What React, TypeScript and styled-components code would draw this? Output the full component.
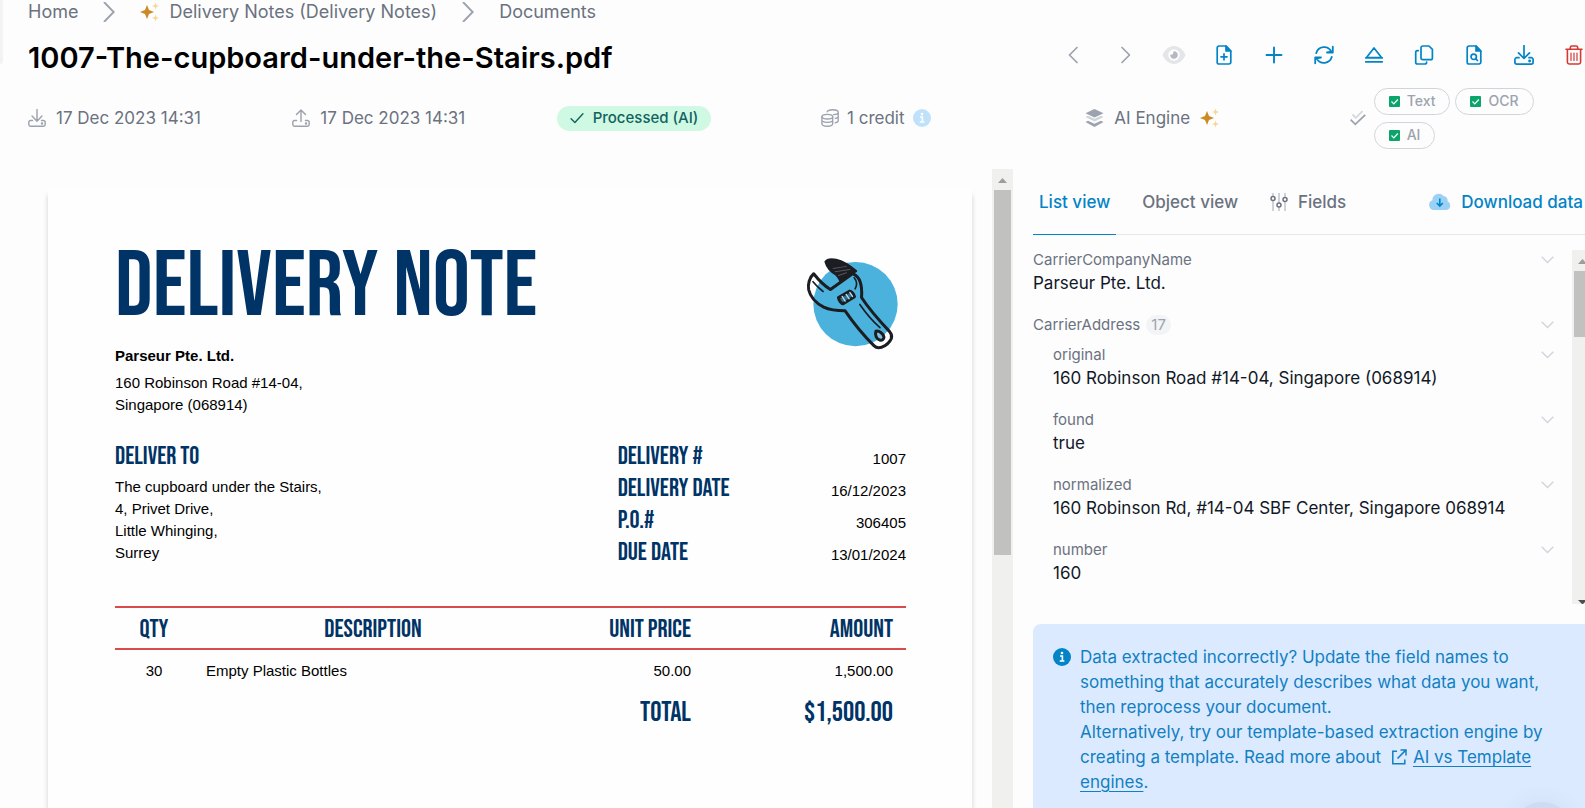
import React from "react";
import styled, { createGlobalStyle } from "styled-components";

const ui = `Inter, "Liberation Sans", sans-serif`;
const display = `"Bebas Neue", "League Gothic", "Open Sans Condensed", sans-serif`;
const paper = `"Liberation Sans", Arial, sans-serif`;

const color = {
  page: "#fdfdfd",
  blue: "#0284c7",
  muted: "#6b7280",
  faint: "#9ca3af",
  line: "#e5e7eb",
  ink: "#111827",
  navy: "#003366",
  red: "#d94a4a",
};

const GlobalStyle = createGlobalStyle`
  *, *::before, *::after { box-sizing: border-box; }
  body { margin: 0; background: ${color.page}; font-family: ${ui}; }
  button { font: inherit; background: none; border: 0; padding: 0; cursor: pointer; }
`;

/* ---------- shell ---------- */

const Shell = styled.div`
  display: flex;
  height: 100vh;
  overflow: hidden;
  color: ${color.muted};
  font-size: 17px;
`;

const Rail = styled.div`
  flex: 0 0 3px;
  height: 64px;
  background: #f3f3f4;
  border-bottom-right-radius: 3px;
`;

const Main = styled.main`
  flex: 1;
  min-width: 0;
  display: flex;
  flex-direction: column;
  padding-left: 25px;
`;

/* ---------- header ---------- */

const Crumbs = styled.nav`
  display: flex;
  align-items: center;
  height: 24px;
  font-size: 18px;
  line-height: 24px;
`;

const Crumb = styled.a`
  display: flex;
  align-items: center;
  gap: 10px;
  color: inherit;
  text-decoration: none;
`;

const CrumbSeparator = styled.svg`
  flex: none;
  width: 12px;
  height: 20px;
  margin: 0 25px;
`;

const TitleRow = styled.div`
  display: flex;
  align-items: center;
  justify-content: space-between;
  height: 36px;
  margin: 13px -14px 0 0;
`;

const Title = styled.h1`
  margin: 0;
  padding-top: 6px;
  color: #000;
  font-size: 29px;
  line-height: 36px;
  font-weight: 600;
  white-space: nowrap;
`;

const Toolbar = styled.div`
  display: flex;
`;

const ToolButton = styled.button<{ $tone: string }>`
  display: grid;
  place-items: center;
  width: 50px;
  height: 36px;
  color: ${(p) => p.$tone};
`;

const MetaRow = styled.div`
  display: grid;
  grid-template-columns: repeat(6, 1fr);
  align-items: center;
  height: 68px;
  margin: 11px -29px 17px 0;
`;

const Meta = styled.div<{ $gap?: number }>`
  display: flex;
  align-items: center;
  gap: ${(p) => p.$gap ?? 10}px;
  white-space: nowrap;
  line-height: 24px;
`;

const MetaIcon = styled.span`
  display: grid;
  color: ${color.faint};
`;

const Status = styled.span`
  display: flex;
  align-items: center;
  gap: 9px;
  height: 25px;
  padding: 0 13px;
  border-radius: 13px;
  background: #d0f9e3;
  color: #11635f;
  font-size: 15px;
  font-weight: 500;
`;

const Pills = styled.div`
  display: flex;
  flex-wrap: wrap;
  gap: 7px 5px;
  max-width: 180px;
`;

const Pill = styled.span`
  display: flex;
  align-items: center;
  gap: 7px;
  height: 27px;
  padding: 0 14px;
  border: 1px solid #d1d5db;
  border-radius: 14px;
  color: ${color.faint};
  font-size: 14px;
  font-weight: 500;
`;

/* ---------- body ---------- */

const Body = styled.div`
  flex: 1;
  min-height: 0;
  display: grid;
  grid-template-columns: 985fr 560fr;
  gap: 20px;
  margin-right: -8px;
`;

const Viewer = styled.section`
  display: flex;
  min-width: 0;
  overflow: hidden;
`;

const Sheet = styled.article`
  flex: 1;
  min-width: 0;
  height: 1308px;
  margin: 20px 20px 0;
  padding: 42px 66px 0 67px;
  background: #fefefe;
  box-shadow: 0 6px 5px rgba(0, 0, 0, 0.18);
  color: #000;
  font-family: ${paper};
  font-size: 15px;
  line-height: 22px;
`;

const SheetTop = styled.header`
  display: flex;
  justify-content: space-between;
  height: 114px;
  padding-right: 6px;
`;

const SheetTitle = styled.h2`
  margin: 12px 0 0;
  color: ${color.navy};
  font-family: ${display};
  font-size: 93px;
  line-height: 88px;
  font-weight: 400;
`;

const Logo = styled.svg`
  width: 97px;
  height: 97px;
  margin-top: 24px;
`;

const Address = styled.address`
  font-style: normal;
`;

const Company = styled.strong`
  display: block;
  margin-bottom: 5px;
`;

const SheetColumns = styled.div`
  display: grid;
  grid-template-columns: 502fr 288fr;
  margin-top: 25px;
`;

const SheetHeading = styled.h3`
  margin: 0 0 3px;
  color: ${color.navy};
  font-family: ${display};
  font-size: 25px;
  line-height: 32px;
  font-weight: 400;
`;

const Facts = styled.dl`
  margin: 0;
`;

const Fact = styled.div`
  display: flex;
  align-items: baseline;
  justify-content: space-between;
  height: 32px;
`;

const FactName = styled.dt`
  color: ${color.navy};
  font-family: ${display};
  font-size: 25px;
  line-height: 32px;
`;

const FactValue = styled.dd`
  margin: 0;
`;

const Lines = styled.table`
  width: 100%;
  margin-top: 37px;
  border-collapse: collapse;
  table-layout: fixed;
`;

const Col = styled.col<{ $width?: string }>`
  width: ${(p) => p.$width ?? "auto"};
`;

const LinesHead = styled.th<{ $align: string }>`
  height: 42px;
  padding: 4px 13px 0;
  border: solid ${color.red};
  border-width: 2px 0;
  color: ${color.navy};
  font-family: ${display};
  font-size: 25px;
  line-height: 36px;
  font-weight: 400;
  text-align: ${(p) => p.$align};
`;

const LinesCell = styled.td<{ $align: string }>`
  height: 42px;
  padding: 0 13px;
  text-align: ${(p) => p.$align};
`;

const TotalCell = styled.td`
  height: 40px;
  padding: 4px 13px 0;
  color: ${color.navy};
  font-family: ${display};
  font-size: 28px;
  line-height: 36px;
  text-align: right;
`;

/* ---------- scrollbars ---------- */

const Track = styled.div`
  flex: 0 0 21px;
  display: flex;
  flex-direction: column;
  justify-content: space-between;
  padding: 0 2px;
  overflow: hidden;
  background: #f0f0ef;
`;

const TrackTop = styled.div``;

const Arrow = styled.svg`
  display: block;
  width: 17px;
  height: 21px;
`;

const CutArrow = styled(Arrow)`
  height: 4px;
`;

const Thumb = styled.div<{ $length: number }>`
  height: ${(p) => p.$length}px;
  background: #c1c1c0;
`;

/* ---------- data panel ---------- */

const Panel = styled.section`
  min-width: 0;
  display: flex;
  flex-direction: column;
`;

const TabBar = styled.div`
  flex: none;
  display: flex;
  gap: 20px;
  height: 66px;
  border-bottom: 1px solid ${color.line};
`;

const Tab = styled.button<{ $active?: boolean }>`
  display: flex;
  align-items: center;
  gap: 10px;
  height: 66px;
  padding: 0 6px;
  border-bottom: 1px solid ${(p) => (p.$active ? color.blue : "transparent")};
  color: ${(p) => (p.$active ? color.blue : color.muted)};
  font-weight: 500;
`;

const Download = styled.a`
  display: flex;
  align-items: center;
  gap: 10px;
  margin: 0 10px 0 auto;
  color: ${color.blue};
  font-weight: 500;
  text-decoration: none;
`;

const FieldsBox = styled.div`
  flex: none;
  display: flex;
  height: 354px;
  margin-top: 15px;
`;

const FieldList = styled.div`
  flex: 1;
  margin-top: -1px;
  overflow: hidden;
`;

const Field = styled.div<{ $nested?: boolean; $group?: boolean }>`
  padding-left: ${(p) => (p.$nested ? 20 : 0)}px;
  margin-bottom: ${(p) => (p.$group ? 8 : 19)}px;
`;

const FieldHead = styled.div`
  display: flex;
  align-items: center;
  gap: 6px;
  height: 22px;
  padding-right: 18px;
  font-size: 15px;
  line-height: 22px;
`;

const Count = styled.span`
  height: 20px;
  padding: 0 5px;
  border-radius: 10px;
  background: #f3f4f6;
  color: ${color.faint};
  line-height: 20px;
`;

const Expand = styled.button`
  display: grid;
  place-items: center;
  margin-left: auto;
`;

const FieldValue = styled.div`
  color: ${color.ink};
  line-height: 24px;
`;

const Notice = styled.aside`
  flex: none;
  display: flex;
  align-items: flex-start;
  gap: 9px;
  margin-top: 20px;
  padding: 21px 30px 20px 20px;
  border-radius: 8px;
  background: #dbeafe;
  color: #1180c3;
  line-height: 25px;
`;

const NoticeIcon = styled.span`
  flex: none;
  display: grid;
  place-items: center;
  height: 24px;
`;

const NoticeText = styled.p`
  margin: 0;
`;

const ExternalIcon = styled.svg`
  width: 16px;
  height: 16px;
  margin: 0 6px 0 5px;
  vertical-align: -2px;
`;

const NoticeLink = styled.a`
  color: inherit;
  text-underline-offset: 3px;
`;

const ChatBubble = styled.button`
  position: fixed;
  right: 13px;
  bottom: -54px;
  width: 60px;
  height: 60px;
  border-radius: 50%;
  background: #cddcf1;
  box-shadow: 0 0 18px 4px rgba(80, 110, 160, 0.06);
`;

/* ---------- icons ---------- */

const Icon = ({ size = 20, w = 1.7, children }: { size?: number; w?: number; children: React.ReactNode }) => (
  <svg width={size} height={size} viewBox="0 0 20 20" fill="none" stroke="currentColor" strokeWidth={w}
    strokeLinecap="round" strokeLinejoin="round" aria-hidden="true">
    {children}
  </svg>
);

const fileOutline = (
  <>
    <path d="M12 1H5a1.8 1.8 0 0 0-1.8 1.8v14.4A1.8 1.8 0 0 0 5 19h10a1.8 1.8 0 0 0 1.8-1.8V6z" />
    <path d="M12 1v5h4.8z" fill="currentColor" />
  </>
);
const tray = (
  <>
    <path d="M5 12.7H2.8A1.9 1.9 0 0 0 .9 14.6v2.6a1.9 1.9 0 0 0 1.9 1.9h14.4a1.9 1.9 0 0 0 1.9-1.9v-2.6a1.9 1.9 0 0 0-1.9-1.9H15" />
    <circle cx="15.6" cy="16" r=".6" fill="currentColor" />
  </>
);

const PrevIcon = () => <Icon><path d="M13 2.5 5.5 10l7.5 7.5" /></Icon>;
const NextIcon = () => <Icon><path d="M8 2.5 15.500 10 8 17.500" /></Icon>;
const EyeIcon = () => (
  <svg width="24" height="20" viewBox="0 0 24 20" aria-hidden="true">
    <path d="M.5 10C3 4.500 7 1 12 1s9 3.500 11.500 9C21 15.500 17 19 12 19S3 15.500.5 10z" fill="#e3e5e8" />
    <circle cx="12" cy="10" r="5.8" fill="#fdfdfd" />
    <path d="M12 6.2a3.8 3.8 0 1 1-3.8 3.4c1.3.7 3.200-.3 3-2.200z" fill="#b4b9c1" />
  </svg>
);
const FileAddIcon = () => <Icon>{fileOutline}<path d="M10 8.800v6M7 11.800h6" /></Icon>;
const PlusIcon = () => <Icon w={1.9}><path d="M10 2.500v15M2.500 10h15" /></Icon>;
const RefreshIcon = () => (
  <Icon w={1.8}>
    <path d="M2.2 8.2A8.2 8.2 0 0 1 17.3 6.4M18.8 1.700v5.800H13l5.800-1z" />
    <path d="M17.8 11.8A8.2 8.2 0 0 1 2.7 13.6M1.2 18.300v-5.800H7l-5.800 1z" />
  </Icon>
);
const EjectIcon = () => <Icon><path d="M10 3 17.500 12.600h-15zM1.700 12.800h16.600M1.700 16.800h16.600" /></Icon>;
const CopyIcon = () => (
  <Icon>
    <path d="M8.700 1h6.300l3.400 3.300v8.700a1.700 1.700 0 0 1-1.700 1.700h-8A1.700 1.700 0 0 1 7 13V2.700A1.700 1.700 0 0 1 8.700 1z" />
    <path d="M4.300 5.600h-.8a1.800 1.800 0 0 0-1.800 1.800v9.800A1.800 1.800 0 0 0 3.500 19h7.300a1.800 1.800 0 0 0 1.800-1.800" />
  </Icon>
);
const FileSearchIcon = () => <Icon>{fileOutline}<circle cx="9.7" cy="11.8" r="2.7" /><path d="m11.800 13.800 1.700 1.700" /></Icon>;
const DownloadIcon = ({ size = 20, w = 1.7 }: { size?: number; w?: number }) => (
  <Icon size={size} w={w}><path d="M10 .7v12.600M4.500 7.800l5.500 5.700 5.500-5.700" />{tray}</Icon>
);
const UploadIcon = () => <Icon size={18} w={1.6}><path d="M10 14V1.200M5 6.200l5-5 5 5" />{tray}</Icon>;
const TrashIcon = () => (
  <Icon w={1.6}>
    <path d="M2 4.300h16M3.400 4.500v12.800A1.800 1.800 0 0 0 5.200 19h9.600a1.800 1.800 0 0 0 1.800-1.700V4.500M6.300 4V2.500A1.600 1.600 0 0 1 7.900 1h4.200a1.600 1.600 0 0 1 1.600 1.500V4" />
    <path d="M7 8v7.500M10 8v7.500M13 8v7.500" strokeWidth="1.2" />
  </Icon>
);
const SparkleIcon = () => (
  <svg width="19" height="20" viewBox="0 0 19 20" aria-hidden="true">
    <path d="M7 3 9 8l5 2-5 2-2 5-2-5-5-2 5-2z" fill="#cb8a25" />
    <path d="m15.500.5.9 2.600 2.600.9-2.600.9-.9 2.600-.9-2.600L12 4l2.600-.9zM15.500 12.500l.9 2.600 2.600.9-2.600.9-.9 2.600-.9-2.600L12 16l2.600-.9z" fill="#f9d596" />
  </svg>
);
const CheckIcon = () => <Icon size={14} w={2}><path d="m1.500 11 5.500 5.500L18.500 4" /></Icon>;
const CoinsIcon = () => (
  <Icon size={18} w={1.5}>
    <ellipse cx="7" cy="8.5" rx="6" ry="2.6" />
    <path d="M1 8.500v8C1 18 3.700 19.200 7 19.200s6-1.200 6-2.700v-8M1 12.300c0 1.500 2.700 2.600 6 2.600s6-1.100 6-2.600" />
    <path d="M6.800 3.200C7.300 1.800 9.900.8 13 .8c3.400 0 6.100 1.200 6.100 2.700S16.600 6 14 6.200M19.100 3.500v9.500c0 1-1.300 1.900-3.200 2.300M19.100 8.200c0 1-1.300 1.900-3.200 2.300" />
  </Icon>
);
const InfoIcon = ({ fill, size = 18 }: { fill: string; size?: number }) => (
  <svg width={size} height={size} viewBox="0 0 18 18" aria-hidden="true">
    <circle cx="9" cy="9" r="9" fill={fill} />
    <circle cx="9" cy="5" r="1.3" fill="#fff" />
    <path d="M7 8h2.400v4.800M6.700 13h4.700" fill="none" stroke="#fff" strokeWidth="1.6" />
  </svg>
);
const LayersIcon = () => (
  <svg width="19" height="18" viewBox="0 0 18 18" fill={color.faint} aria-hidden="true">
    <path d="m9 0 9 4.200-9 4.200L0 4.200z" />
    <path d="m0 8 2.500-1.200L9 9.800l6.500-3L18 8l-9 4.600z" opacity=".45" />
    <path d="m0 13 2.500-1.300L9 14.800l6.500-3.100L18 13l-9 5z" />
  </svg>
);
const DoubleCheckIcon = () => (
  <svg width="16" height="16" viewBox="0 0 16 16" fill="none" strokeWidth="1.8" aria-hidden="true">
    <path d="m2.500 4.500 3.300 3.300L12.500 1.200" stroke="#d5d8dd" />
    <path d="m.6 9.600 4.700 4.700L15.200 4.800" stroke={color.faint} />
  </svg>
);
const TickBox = () => (
  <svg width="11" height="11" viewBox="0 0 11 11" aria-hidden="true">
    <rect width="11" height="11" rx="1" fill="#0ba56c" />
    <path d="m2.500 5.500 2.300 2.300 4-4.300" fill="none" stroke="#fff" strokeWidth="1.2" />
  </svg>
);
const SlidersIcon = () => (
  <svg width="18" height="18" viewBox="0 0 18 18" fill="none" strokeWidth="1.5" aria-hidden="true">
    <path d="M3 0v18M9 0v18M15 0v18" stroke="#cfd3d9" strokeWidth="2" />
    <g fill="#fdfdfd" stroke="#6b7280">
      <circle cx="3" cy="5.5" r="2" /><circle cx="9" cy="12" r="2" /><circle cx="15" cy="6.5" r="2" />
    </g>
  </svg>
);
const CloudIcon = () => (
  <svg width="22" height="18" viewBox="0 0 22 18" fill="none" aria-hidden="true">
    <path d="M5 17a5 5 0 0 1-1.600-9.700A6.300 6.300 0 0 1 14.500 3a4.200 4.200 0 0 1 4 5.300A4.600 4.600 0 0 1 17.500 17z" fill="#9bd1f7" />
    <path d="M10.800 5.500v7.500M7.800 10l3 3 3-3" stroke={color.blue} strokeWidth="1.6" />
  </svg>
);
const ChevronDown = () => (
  <svg width="13" height="8" viewBox="0 0 13 8" fill="none" stroke="#d1d5db" strokeWidth="1.4" aria-hidden="true">
    <path d="m.7.8 5.800 5.800L12.300.8" />
  </svg>
);
const Separator = () => (
  <CrumbSeparator viewBox="0 0 12 20" fill="none" stroke={color.faint} strokeWidth="1.9" aria-hidden="true">
    <path d="M1 0l9.700 10L1 20" />
  </CrumbSeparator>
);
const UpArrow = () => <Arrow viewBox="0 0 17 21"><path d="M4 14h9L8.500 9z" fill="#9a9e9e" /></Arrow>;

const Wrench = () => (
  <Logo viewBox="40 30 290 290" fill="none" stroke="#1c1d22" strokeLinecap="round" strokeLinejoin="round" aria-label="Wrench">
    <circle cx="197" cy="177" r="126" fill="#4ab2dc" stroke="none" />
    <path d="M255 294 300 252 306 278 286 302 264 306z" fill="#fff" stroke="none" />
    <path d="M72 86C59 97 54 118 57 134c5 22 22 40 45 52 19 9 42 11 64 11 28 41 57 75 86 104 7 7 17 7 25 4 12-5 22-14 27-25 3-8 0-15-5-21-30-32-60-65-84-102 1-15 2-29-4-46-3-10-11-20-23-25l-66 47C107 124 90 109 72 86z" strokeWidth="9" />
    <path d="M107 50c5-8 20-8 32-6 22 5 44 20 60 34l-48 29c-3-8-7-13-12-18-15-9-27-20-32-39z" fill="#1c1d22" strokeWidth="6" />
    <path d="m130 70 40-6M136 80l44-7M146 91l24-8" stroke="#55575e" strokeWidth="3" />
    <path d="M70 110c8 10 18 20 30 29M193 98c9 10 9 24 3 33M210 178c18 26 38 50 60 69" strokeWidth="5" />
    <path d="m146 157 34-19c6 1 13 10 14 17l-34 21c-6-1-13-11-14-19z" fill="#2d6f8c" strokeWidth="9" />
    <path d="m157 154 9 14M169 148l9 13M180 142l8 12" stroke="#b9dcea" strokeWidth="4" />
    <path d="M258 258c9-3 22 7 24 17 0 7-6 11-11 10-11-3-17-15-13-27z" fill="#7fc5e2" strokeWidth="9" />
  </Logo>
);

/* ---------- data ---------- */

const tools = [
  { name: "Previous", tone: color.faint, Glyph: PrevIcon },
  { name: "Next", tone: color.faint, Glyph: NextIcon },
  { name: "View", tone: color.faint, Glyph: EyeIcon },
  { name: "New template", tone: color.blue, Glyph: FileAddIcon },
  { name: "Add", tone: color.blue, Glyph: PlusIcon },
  { name: "Reprocess", tone: color.blue, Glyph: RefreshIcon },
  { name: "Skip", tone: color.blue, Glyph: EjectIcon },
  { name: "Copy", tone: color.blue, Glyph: CopyIcon },
  { name: "Inspect", tone: color.blue, Glyph: FileSearchIcon },
  { name: "Download", tone: color.blue, Glyph: DownloadIcon },
  { name: "Delete", tone: "#d33a35", Glyph: TrashIcon },
];

const facts = [
  ["DELIVERY #", "1007"],
  ["DELIVERY DATE", "16/12/2023"],
  ["P.O.#", "306405"],
  ["DUE DATE", "13/01/2024"],
];

const fields: { name: string; value?: string; count?: number; nested?: boolean }[] = [
  { name: "CarrierCompanyName", value: "Parseur Pte. Ltd." },
  { name: "CarrierAddress", count: 17 },
  { name: "original", value: "160 Robinson Road #14-04, Singapore (068914)", nested: true },
  { name: "found", value: "true", nested: true },
  { name: "normalized", value: "160 Robinson Rd, #14-04 SBF Center, Singapore 068914", nested: true },
  { name: "number", value: "160", nested: true },
];

export default function App() {
  return (
    <>
      <GlobalStyle />
      <Shell>
        <Rail />
        <Main>
          <Crumbs aria-label="Breadcrumb">
            <Crumb href="#home">Home</Crumb>
            <Separator />
            <Crumb href="#mailbox"><SparkleIcon />Delivery Notes (Delivery Notes)</Crumb>
            <Separator />
            <Crumb href="#documents">Documents</Crumb>
          </Crumbs>

          <TitleRow>
            <Title>1007-The-cupboard-under-the-Stairs.pdf</Title>
            <Toolbar>
              {tools.map(({ name, tone, Glyph }) => (
                <ToolButton key={name} $tone={tone} aria-label={name}><Glyph /></ToolButton>
              ))}
            </Toolbar>
          </TitleRow>

          <MetaRow>
            <Meta><MetaIcon><DownloadIcon size={18} w={1.6} /></MetaIcon>17 Dec 2023 14:31</Meta>
            <Meta><MetaIcon><UploadIcon /></MetaIcon>17 Dec 2023 14:31</Meta>
            <Meta><Status><CheckIcon />Processed (AI)</Status></Meta>
            <Meta $gap={8}><MetaIcon><CoinsIcon /></MetaIcon>1 credit<InfoIcon fill="#bfe1fb" /></Meta>
            <Meta><LayersIcon />AI Engine<SparkleIcon /></Meta>
            <Meta $gap={8}>
              <DoubleCheckIcon />
              <Pills>
                {["Text", "OCR", "AI"].map((t) => <Pill key={t}><TickBox />{t}</Pill>)}
              </Pills>
            </Meta>
          </MetaRow>

          <Body>
            <Viewer>
              <Sheet>
                <SheetTop>
                  <SheetTitle>DELIVERY NOTE</SheetTitle>
                  <Wrench />
                </SheetTop>
                <Address>
                  <Company>Parseur Pte. Ltd.</Company>
                  160 Robinson Road #14-04,<br />Singapore (068914)
                </Address>
                <SheetColumns>
                  <div>
                    <SheetHeading>DELIVER TO</SheetHeading>
                    <Address>
                      The cupboard under the Stairs,<br />4, Privet Drive,<br />Little Whinging,<br />Surrey
                    </Address>
                  </div>
                  <Facts>
                    {facts.map(([name, value]) => (
                      <Fact key={name}>
                        <FactName>{name}</FactName>
                        <FactValue>{value}</FactValue>
                      </Fact>
                    ))}
                  </Facts>
                </SheetColumns>
                <Lines>
                  <colgroup>
                    <Col $width="78px" /><Col /><Col $width="151px" /><Col $width="202px" />
                  </colgroup>
                  <thead>
                    <tr>
                      <LinesHead $align="center">QTY</LinesHead>
                      <LinesHead $align="center">DESCRIPTION</LinesHead>
                      <LinesHead $align="right">UNIT PRICE</LinesHead>
                      <LinesHead $align="right">AMOUNT</LinesHead>
                    </tr>
                  </thead>
                  <tbody>
                    <tr>
                      <LinesCell $align="center">30</LinesCell>
                      <LinesCell $align="left">Empty Plastic Bottles</LinesCell>
                      <LinesCell $align="right">50.00</LinesCell>
                      <LinesCell $align="right">1,500.00</LinesCell>
                    </tr>
                    <tr>
                      <TotalCell colSpan={3}>TOTAL</TotalCell>
                      <TotalCell>$1,500.00</TotalCell>
                    </tr>
                  </tbody>
                </Lines>
              </Sheet>
              <Track>
                <TrackTop><UpArrow /><Thumb $length={365} /></TrackTop>
              </Track>
            </Viewer>

            <Panel>
              <TabBar>
                <Tab $active>List view</Tab>
                <Tab>Object view</Tab>
                <Tab><SlidersIcon />Fields</Tab>
                <Download href="#download"><CloudIcon />Download data</Download>
              </TabBar>

              <FieldsBox>
                <FieldList>
                  {fields.map((f) => (
                    <Field key={f.name} $nested={f.nested} $group={f.count !== undefined}>
                      <FieldHead>
                        {f.name}
                        {f.count !== undefined && <Count>{f.count}</Count>}
                        <Expand aria-label={`Options for ${f.name}`}><ChevronDown /></Expand>
                      </FieldHead>
                      {f.value && <FieldValue>{f.value}</FieldValue>}
                    </Field>
                  ))}
                </FieldList>
                <Track>
                  <TrackTop><UpArrow /><Thumb $length={66} /></TrackTop>
                  <CutArrow viewBox="0 0 17 4"><path d="M4 0h9L9 4H8z" fill="#4d5052" /></CutArrow>
                </Track>
              </FieldsBox>

              <Notice>
                <NoticeIcon><InfoIcon fill={color.blue} /></NoticeIcon>
                <NoticeText>
                  Data extracted incorrectly? Update the field names to something that accurately
                  describes what data you want, then reprocess your document.<br />
                  Alternatively, try our template-based extraction engine by creating a template. Read
                  more about{" "}
                  <ExternalIcon viewBox="0 0 16 16" fill="none" stroke="currentColor" strokeWidth="1.5" aria-hidden="true">
                    <path d="M6 2.200H1.800v12.500h12V10.500M9.500.9H15v5.600M15 .9 6.500 9.500" />
                  </ExternalIcon>
                  <NoticeLink href="#engines">AI vs Template engines</NoticeLink>.
                </NoticeText>
              </Notice>
            </Panel>
          </Body>
        </Main>
        <ChatBubble aria-label="Open chat" />
      </Shell>
    </>
  );
}
